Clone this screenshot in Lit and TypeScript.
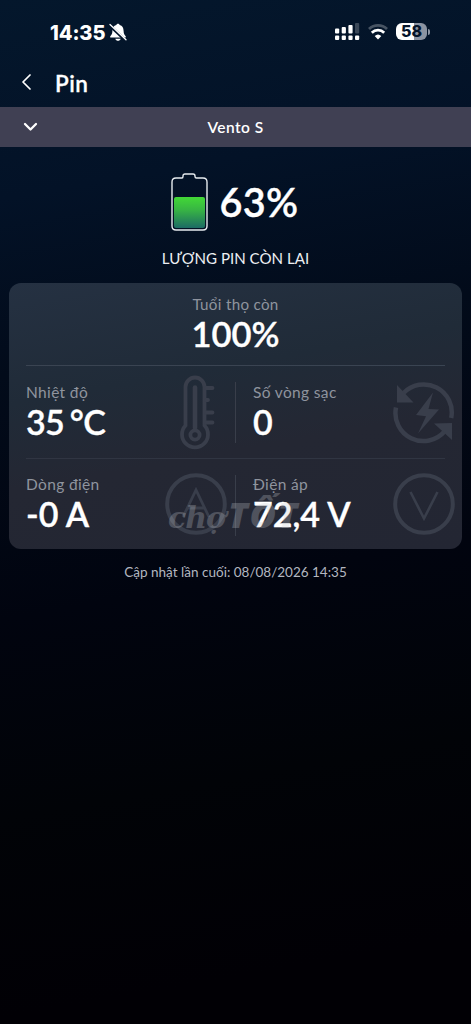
import { LitElement, html, css, svg } from "lit";
import { customElement, property } from "lit/decorators.js";

const thermometer = svg`
  <svg width="36" height="76" viewBox="0 0 36 76" fill="none" stroke="currentColor" stroke-width="3.800">
    <path d="M6.500 51.500V13a9.500 9.500 0 0 1 19 0V51.500a13 13 0 1 1-19 0Z"/>
    <path d="M16 13.500V54" stroke-width="4.600" stroke-linecap="round"/>
    <circle cx="16" cy="61" r="4.600"/>
    <path d="M27 14h6.500M27 26h2M27 38.500h6.500M27 48.500h6.500" stroke-linecap="round"/>
  </svg>`;

const cycle = svg`
  <svg width="62" height="64" viewBox="0 0 62 64" fill="none" stroke="currentColor" stroke-width="4.500">
    <path d="M10.300 13.300A28 28 0 0 1 58.200 38"/>
    <path d="M3 27.500A28 28 0 0 0 51.700 51.300"/>
    <path d="M4 5V22.500H20.500Z" fill="currentColor" stroke="none"/>
    <path d="M59 60V43L41 43.500Z" fill="currentColor" stroke="none"/>
    <path d="M40 12.500L23 35l10 1.300L25 53.500L46 29.500l-10.500-.5Z" fill="currentColor" stroke="none"/>
  </svg>`;

const ammeter = svg`
  <svg width="62" height="64" viewBox="0 0 62 64" fill="none" stroke="currentColor">
    <circle cx="31" cy="32" r="28.800" stroke-width="4"/>
    <path d="M18 45L31 18L44 45M22.500 36h17" stroke-width="2.800"/>
  </svg>`;

const voltmeter = svg`
  <svg width="62" height="64" viewBox="0 0 62 64" fill="none" stroke="currentColor">
    <circle cx="31" cy="32" r="28.800" stroke-width="4"/>
    <path d="M17.500 20L31 46.500L44.500 20" stroke-width="2.600"/>
  </svg>`;

@customElement("status-bar")
class StatusBar extends LitElement {
  static styles = css`
    :host { display: flex; height: 64px; box-sizing: border-box; padding: 22px 41px 0 50px; align-items: flex-start; color: #fff; font-family: Inter, sans-serif; }
    .time { font-size: 20px; line-height: 22px; font-weight: 800; letter-spacing: -.1px; width: 59px; white-space: nowrap; }
    .bell { margin-top: 1px; }
    .signal { margin: 1px 8px 0 auto; }
    .wifi { margin: 2px 8px 0 0; }
    .battery { display: flex; align-items: center; gap: 1px; margin-top: 1px; }
    .level { width: 31px; height: 17px; border-radius: 6px; background: linear-gradient(90deg, #fff 58%, #8c94a2 58%); color: #04142a; font-size: 16px; line-height: 17px; font-weight: 800; text-align: center; }
    .tip { width: 2px; height: 6px; border-radius: 0 2px 2px 0; background: #8c94a2; }
  `;
  render() {
    return html`
      <span class="time">14:35</span>
      <svg class="bell" width="18" height="19" viewBox="0 0 18 19">
        <path d="M9 .800c-.9 0-1.500.6-1.700 1.300C4.600 2.800 3.500 5 3.400 8 3.300 11 2.400 11.800 1.300 13.200c-.4.700-.1 1.300.7 1.300h14c.8 0 1.100-.6.700-1.300C15.600 11.800 14.700 11 14.600 8 14.500 5 13.400 2.800 10.700 2.100 10.500 1.400 9.900.800 9 .800ZM6.300 15.700c.5 1.500 1.500 2 2.700 2s2.200-.5 2.700-2Z" fill="#fff"/>
        <path d="M0 1.800L17 18" stroke="#04152b" stroke-width="2.800"/>
        <path d="M1 1.500L17 16.800" stroke="#fff" stroke-width="1.300" stroke-linecap="round"/>
      </svg>
      <svg class="signal" width="25" height="18" viewBox="0 0 25 18" fill="#fff">
        <rect x="0" y="5.500" width="4.200" height="5" rx="1"/><rect x="6.700" y="4" width="4.200" height="6.500" rx="1"/>
        <rect x="13.400" y="2" width="4.200" height="8.500" rx="1"/><rect x="20" y="0" width="4.200" height="10.500" rx="1" opacity=".22"/>
        <rect x="0" y="12.500" width="4.200" height="4.500" rx="1"/><rect x="6.700" y="12.500" width="4.200" height="4.500" rx="1"/>
        <rect x="13.400" y="12.500" width="4.200" height="4.500" rx="1"/><rect x="20" y="12.500" width="4.200" height="4.500" rx="1"/>
      </svg>
      <svg class="wifi" width="20" height="16" viewBox="0 0 20 16" fill="none">
        <path d="M1 5A13.200 13.200 0 0 1 19 5" stroke="#fff" stroke-width="2.800" opacity=".27"/>
        <path d="M3.800 8.700A8.900 8.900 0 0 1 16.200 8.700" stroke="#fff" stroke-width="2.800"/>
        <path d="M10 15.500L6.700 12A4.800 4.800 0 0 1 13.300 12Z" fill="#fff"/>
      </svg>
      <span class="battery"><span class="level">58</span><span class="tip"></span></span>
    `;
  }
}

@customElement("metric-cell")
class MetricCell extends LitElement {
  @property() label = "";
  @property() value = "";
  @property({ attribute: false }) icon: unknown;
  static styles = css`
    :host { display: flex; justify-content: space-between; align-items: center; min-width: 0; }
    .label { font-size: 15.500px; line-height: 20px; color: #8f949e; letter-spacing: .35px; white-space: nowrap; }
    .value { font-size: 34px; line-height: 40px; font-weight: 600; -webkit-text-stroke: .35px #fff; color: #fff; white-space: pre; }
    :host([compact]) .value { letter-spacing: -.7px; word-spacing: -2px; }
    .icon { display: flex; flex: none; color: #393e4b; }
  `;
  render() {
    return html`
      <div><div class="label">${this.label}</div><div class="value">${this.value}</div></div>
      <span class="icon">${this.icon}</span>`;
  }
}

@customElement("app-root")
class AppRoot extends LitElement {
  static styles = css`
    :host { display: block; height: 1024px; overflow: hidden; position: relative; color: #fff; font-family: Lato, "Noto Sans", sans-serif;
      background: linear-gradient(170deg, #04172c 0%, #031227 18%, #020b1a 34%, #01040f 56%, #010307 74%, #010005 92%); }
    .header { display: flex; align-items: center; height: 43px; box-sizing: border-box; padding: 0 0 5px 21px; gap: 23px; }
    .header svg { margin-top: -2px; }
    .title { font-size: 22.500px; line-height: 28px; font-weight: 600; -webkit-text-stroke: .3px #fff; letter-spacing: .5px; margin-top: 1px; }
    .vehicle { display: grid; grid-template-columns: 61px 1fr 61px; align-items: center; height: 40px; background: #404053; }
    .vehicle svg { margin-left: 23px; }
    .name { text-align: center; font-size: 15.500px; font-weight: 600; letter-spacing: .45px; }
    .hero { display: flex; justify-content: center; align-items: center; gap: 12px; height: 110px; box-sizing: border-box; padding: 0 2px 1px 0; }
    .percent { font-size: 39.500px; line-height: 46px; font-weight: 600; -webkit-text-stroke: .4px #fff; letter-spacing: .3px; }
    .caption { height: 26px; box-sizing: border-box; text-align: center; font-size: 15.100px; line-height: 3px; color: #eceef2; }
    .card { margin: 0 9px; height: 266px; box-sizing: border-box; border-radius: 12px; padding: 0 17px; background: linear-gradient(170deg, #253142 0%, #202b38 35%, #242733 60%, #232633 100%); }
    .life { height: 83px; box-sizing: border-box; padding-top: 11px; text-align: center; border-bottom: 1px solid #3a4452; }
    .life-label { font-size: 15.200px; line-height: 20px; color: #8f949e; letter-spacing: .3px; }
    .life-value { font-size: 34.500px; line-height: 40px; font-weight: 600; -webkit-text-stroke: .35px #fff; }
    .row { display: grid; grid-template-columns: 210px 1fr; height: 92px; box-sizing: border-box; padding-bottom: 1px; }
    .row + .row { border-top: 1px solid #303542; }
    .left { padding-right: 9px; }
    .left.wide-gap { padding-right: 21px; }
    .right { position: relative; padding-left: 17px; margin-right: -10px; }
    .right::before { content: ""; position: absolute; left: -1px; top: 16px; height: 61px; width: 1px; background: #393e4a; }
    .updated { margin-top: 13px; text-align: center; font-size: 13.500px; line-height: 20px; color: #b3b7c0; }
    .watermark { position: absolute; left: 168px; top: 491px; display: flex; align-items: baseline; gap: 3px; opacity: .27; color: #c7c9cf; white-space: nowrap; pointer-events: none; }
    .cho { font: italic 700 30px/48px "DejaVu Serif", serif; letter-spacing: -1px; }
    .tot { font: italic 800 36px/48px "Open Sans", sans-serif; letter-spacing: 1.500px; }
  `;
  render() {
    return html`
      <status-bar></status-bar>
      <div class="header">
        <svg width="11" height="16" viewBox="0 0 11 16" fill="none" stroke="#fff" stroke-width="1.700"><path d="M9 1L2 8L9 15" stroke-linecap="round" stroke-linejoin="round"/></svg>
        <span class="title">Pin</span>
      </div>
      <div class="vehicle">
        <svg width="15" height="10" viewBox="0 0 15 10" fill="none" stroke="#fff" stroke-width="2.300"><path d="M2 2L7.500 7.500L13 2" stroke-linecap="round" stroke-linejoin="round"/></svg>
        <span class="name">Vento S</span>
      </div>
      <div class="hero">
        <svg width="37" height="58" viewBox="0 0 37 58" fill="none">
          <defs><linearGradient id="charge" x1="0" y1="0" x2="0" y2="1"><stop stop-color="#42d936"/><stop offset=".4" stop-color="#38b643"/><stop offset="1" stop-color="#1c6b64"/></linearGradient></defs>
          <path d="M5 5H11Q12 5 12 3.500V3Q12 1 14 1H22Q24 1 24 3V3.500Q24 5 25.500 5H32Q36 5 36 9V53Q36 57 32 57H5Q1 57 1 53V9Q1 5 5 5Z" stroke="#e7ebef" stroke-width="1.400"/>
          <rect x="3" y="24" width="31" height="31" rx="2" fill="url(#charge)"/>
        </svg>
        <span class="percent">63%</span>
      </div>
      <div class="caption">LƯỢNG PIN CÒN LẠI</div>
      <div class="card">
        <div class="life"><div class="life-label">Tuổi thọ còn</div><div class="life-value">100%</div></div>
        <div class="row">
          <metric-cell compact class="left wide-gap" label="Nhiệt độ" value="35 °C" .icon=${thermometer}></metric-cell>
          <metric-cell class="right" label="Số vòng sạc" value="0" .icon=${cycle}></metric-cell>
        </div>
        <div class="row">
          <metric-cell class="left" label="Dòng điện" value="-0 A" .icon=${ammeter}></metric-cell>
          <metric-cell class="right" label="Điện áp" value="72,4 V" .icon=${voltmeter}></metric-cell>
        </div>
      </div>
      <div class="updated">Cập nhật lần cuối: 08/08/2026 14:35</div>
      <div class="watermark"><span class="cho">chợ</span><span class="tot">TỐT</span></div>
    `;
  }
}
